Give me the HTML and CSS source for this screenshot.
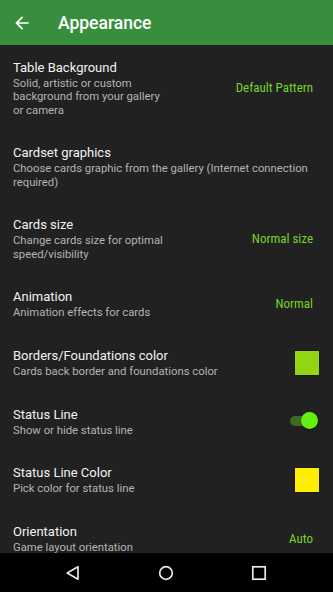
FILE: index.html
```html
<!DOCTYPE html>
<html>
<head>
<meta charset="utf-8">
<link rel="stylesheet" href="styles.css">
</head>
<body>
<div class="screen">
  <header class="appbar">
    <svg class="back" viewBox="0 0 24 24" width="20" height="20"><path d="M20 11H7.83l5.59-5.59L12 4l-8 8 8 8 1.41-1.41L7.83 13H20v-2z" fill="#ffffff"/></svg>
    <div class="apptitle">Appearance</div>
  </header>
  <main class="content">
    <div class="pref">
      <div class="texts narrow">
        <div class="ptitle">Table Background</div>
        <div class="psub">Solid, artistic or custom background from your gallery or camera</div>
      </div>
      <div class="value">Default Pattern</div>
    </div>
    <div class="pref">
      <div class="texts">
        <div class="ptitle">Cardset graphics</div>
        <div class="psub">Choose cards graphic from the gallery (Internet connection required)</div>
      </div>
    </div>
    <div class="pref">
      <div class="texts narrow">
        <div class="ptitle">Cards size</div>
        <div class="psub">Change cards size for optimal speed/visibility</div>
      </div>
      <div class="value">Normal size</div>
    </div>
    <div class="pref">
      <div class="texts narrow">
        <div class="ptitle">Animation</div>
        <div class="psub">Animation effects for cards</div>
      </div>
      <div class="value">Normal</div>
    </div>
    <div class="pref">
      <div class="texts">
        <div class="ptitle">Borders/Foundations color</div>
        <div class="psub">Cards back border and foundations color</div>
      </div>
      <div class="swatch lime"></div>
    </div>
    <div class="pref">
      <div class="texts">
        <div class="ptitle">Status Line</div>
        <div class="psub">Show or hide status line</div>
      </div>
      <div class="switch"><div class="track"></div><div class="thumb"></div></div>
    </div>
    <div class="pref">
      <div class="texts">
        <div class="ptitle">Status Line Color</div>
        <div class="psub">Pick color for status line</div>
      </div>
      <div class="swatch yellow"></div>
    </div>
    <div class="pref">
      <div class="texts narrow">
        <div class="ptitle">Orientation</div>
        <div class="psub">Game layout orientation</div>
      </div>
      <div class="value">Auto</div>
    </div>
  </main>
  <nav class="navbar">
    <svg class="nav-ic" viewBox="0 0 16 16" width="16" height="16"><path d="M13 1.8 L2.2 8 L13 14.2 Z" fill="none" stroke="#e8e8e8" stroke-width="1.7" stroke-linejoin="round"/></svg>
    <svg class="nav-ic" viewBox="0 0 16 16" width="16" height="16"><circle cx="8" cy="8" r="6.3" fill="none" stroke="#e8e8e8" stroke-width="1.7"/></svg>
    <svg class="nav-ic" viewBox="0 0 16 16" width="16" height="16"><rect x="1.8" y="1.8" width="12.4" height="12.4" fill="none" stroke="#e8e8e8" stroke-width="1.7"/></svg>
  </nav>
</div>
</body>
</html>
```

FILE: styles.css
```css
html, body {
  margin: 0;
  padding: 0;
  background: #212121;
}
.screen {
  width: 333px;
  height: 592px;
  display: flex;
  flex-direction: column;
  overflow: hidden;
  font-family: Roboto, "Liberation Sans", sans-serif;
}
.appbar {
  height: 45px;
  flex: 0 0 45px;
  background: #388e3c;
  display: flex;
  align-items: center;
  padding-left: 12px;
  box-sizing: border-box;
}
.back {
  display: block;
  margin-top: 1px;
}
.apptitle {
  margin-left: 26px;
  color: #ffffff;
  font-size: 17.5px;
  font-weight: 500;
  margin-top: 1px;
}
.content {
  flex: 1 1 auto;
  overflow: hidden;
  background: #212121;
}
.pref {
  display: flex;
  align-items: center;
  padding: 14px 20px 13.4px 13px;
}
.texts {
  flex: 1 1 auto;
  min-width: 0;
}
.texts.narrow {
  flex: 0 0 158px;
}
.ptitle {
  color: #f2f2f2;
  font-size: 13px;
  line-height: 17px;
  margin-bottom: 1px;
}
.psub {
  color: #b4b4b4;
  font-size: 11.3px;
  line-height: 13.3px;
}
.value {
  flex: 1 1 auto;
  text-align: right;
  color: #78d42a;
  font-size: 13px;
  font-stretch: 75%;
  font-family: "Roboto Condensed", Roboto, sans-serif;
}
.swatch {
  width: 24px;
  height: 24px;
  border: 1px solid #1a1a1a;
  margin-right: -7px;
  flex: 0 0 auto;
}
.lime { background: #92d612; }
.yellow { background: #ffee00; }
.switch {
  position: relative;
  width: 28px;
  height: 18px;
  flex: 0 0 auto;
  margin-right: -5px;
}
.track {
  position: absolute;
  left: 0;
  top: 4px;
  width: 24px;
  height: 10px;
  border-radius: 5px;
  background: #3d6a22;
}
.thumb {
  position: absolute;
  right: 0;
  top: 0;
  width: 17px;
  height: 17px;
  border-radius: 50%;
  background: #66ee10;
  box-shadow: 0 1px 1px rgba(0,0,0,0.4);
}
.navbar {
  flex: 0 0 39px;
  height: 39px;
  background: #000000;
  display: flex;
  align-items: center;
  padding-left: 65px;
  gap: 77px;
}
.nav-ic {
  display: block;
}
```
